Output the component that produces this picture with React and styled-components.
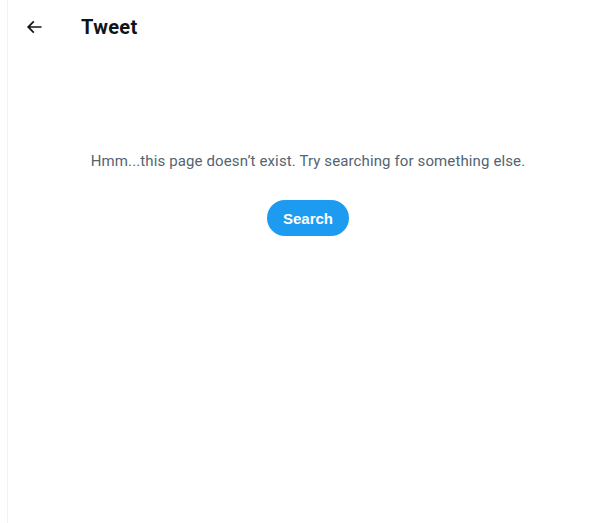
import React from "react";
import styled, { createGlobalStyle } from "styled-components";

const GlobalStyle = createGlobalStyle`
  html, body {
    margin: 0;
    padding: 0;
    background: #fff;
    overflow: hidden;
  }
  body {
    font-family: Roboto, "Noto Sans", sans-serif;
  }
`;

const Page = styled.div`
  display: flex;
  min-height: 523px;
  padding-left: 7px;
`;

const Column = styled.main`
  width: 600px;
  flex-shrink: 0;
  border-left: 1px solid #eff3f4;
  border-right: 1px solid #eff3f4;
  min-height: 523px;
`;

const Header = styled.header`
  display: flex;
  align-items: center;
  height: 53px;
  padding: 0 16px 0 8px;
`;

const BackButton = styled.button`
  width: 36px;
  height: 36px;
  margin-right: 29px;
  display: flex;
  align-items: center;
  justify-content: center;
  border: none;
  border-radius: 50%;
  background: transparent;
  color: #0f1419;
  padding: 0;
  cursor: pointer;

  svg {
    width: 20px;
    height: 20px;
  }
`;

const Title = styled.h2`
  margin: 0;
  font-size: 20px;
  font-weight: 700;
  line-height: 24px;
  letter-spacing: 0.3px;
  color: #0f1419;
`;

const Empty = styled.div`
  display: flex;
  flex-direction: column;
  align-items: center;
  padding-top: 98px;
`;

const Message = styled.p`
  margin: 0 0 29px;
  font-size: 15px;
  line-height: 20px;
  letter-spacing: 0.12px;
  color: #536471;
`;

const SearchButton = styled.button`
  height: 36px;
  padding: 0 16px;
  border: none;
  border-radius: 9999px;
  background: #1d9bf0;
  color: #fff;
  font-family: "Liberation Sans", Arial, sans-serif;
  font-size: 15px;
  font-weight: 700;
  cursor: pointer;
`;

const ArrowLeft = () => (
  <svg viewBox="0 0 24 24" aria-hidden="true">
    <path
      fill="currentColor"
      d="M7.414 13l5.043 5.04-1.414 1.42L3.586 12l7.457-7.46 1.414 1.42L7.414 11H21v2H7.414z"
    />
  </svg>
);

export default function App() {
  return (
    <>
      <GlobalStyle />
      <Page>
        <Column>
          <Header>
            <BackButton aria-label="Back">
              <ArrowLeft />
            </BackButton>
            <Title>Tweet</Title>
          </Header>
          <Empty>
            <Message>Hmm...this page doesn’t exist. Try searching for something else.</Message>
            <SearchButton>Search</SearchButton>
          </Empty>
        </Column>
      </Page>
    </>
  );
}
